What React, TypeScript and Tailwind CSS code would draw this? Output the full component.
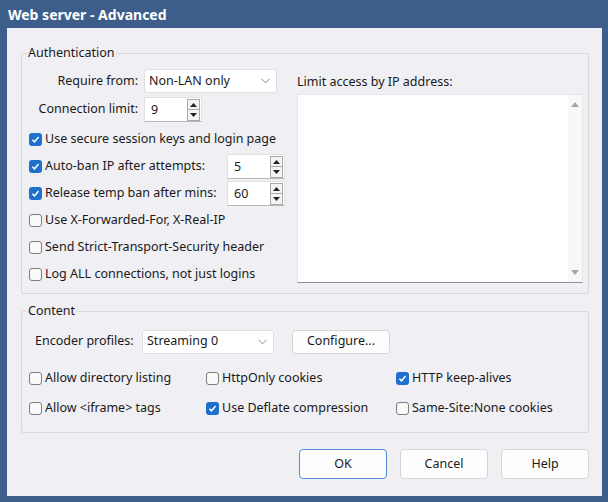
import React from "react";

function Check({ checked }: { checked?: boolean }) {
  return checked ? (
    <span className="w-[13px] h-[13px] rounded-[3px] bg-[#1f6fcc] flex items-center justify-center shrink-0">
      <svg width="9" height="9" viewBox="0 0 9 9">
        <path d="M1.4 4.7 L3.5 6.8 L7.6 2.1" stroke="white" strokeWidth="1.5" fill="none" />
      </svg>
    </span>
  ) : (
    <span className="w-[13px] h-[13px] rounded-[3px] border border-[#7d7d7d] bg-[#f9f9f9] shrink-0" />
  );
}

function CheckRow({ checked, label, className = "" }: { checked?: boolean; label: string; className?: string }) {
  return (
    <div className={"flex items-center gap-[3px] " + className}>
      <Check checked={checked} />
      <span className="whitespace-nowrap">{label}</span>
    </div>
  );
}

function Tri({ down }: { down?: boolean }) {
  return (
    <svg width="7" height="4" viewBox="0 0 7 4">
      {down ? <path d="M0 0 L7 0 L3.5 4 Z" fill="#222" /> : <path d="M0 4 L7 4 L3.5 0 Z" fill="#222" />}
    </svg>
  );
}

function Spin({ value }: { value: string }) {
  return (
    <div className="flex w-[58px] h-[25px] bg-white border border-[#e2e2e2] border-b-[#b8b8b8] shrink-0">
      <span className="flex-1 pl-[6px] leading-[23px]">{value}</span>
      <div className="flex flex-col w-[13px] mr-[1px] mt-[1px]">
        <div className="h-[11px] border border-[#a9a9a9] bg-[#f4f4f4] flex items-center justify-center">
          <Tri />
        </div>
        <div className="h-[11px] border border-[#a9a9a9] border-t-0 bg-[#f4f4f4] flex items-center justify-center">
          <Tri down />
        </div>
      </div>
    </div>
  );
}

function Select({ value, w }: { value: string; w: string }) {
  return (
    <div className={"flex items-center h-[24px] bg-white border border-[#e0e0e0] rounded-[3px] pl-[4px] pr-[6px] shrink-0 " + w}>
      <span className="flex-1">{value}</span>
      <svg width="9" height="6" viewBox="0 0 9 6">
        <path d="M0.5 0.8 L4.5 4.8 L8.5 0.8" stroke="#8a8a8a" strokeWidth="1" fill="none" />
      </svg>
    </div>
  );
}

function Btn({ label, focused, w = "w-[88px]", h = "h-[30px]" }: { label: string; focused?: boolean; w?: string; h?: string }) {
  return (
    <div
      className={
        "flex items-center justify-center bg-[#fdfdfd] rounded-[4px] border shrink-0 " +
        w +
        " " +
        h +
        " " +
        (focused ? "border-[#4f8fcf]" : "border-[#d6d6d6]")
      }
    >
      {label}
    </div>
  );
}

export default function App() {
  return (
    <div className="w-[608px] h-[502px] bg-[#3d5e8a] flex flex-col font-['Noto_Sans',sans-serif] text-[12.5px] text-[#1a1a1a] overflow-hidden">
      <div className="h-[28px] pl-[8px] flex items-center text-white font-bold text-[14px]">Web server - Advanced</div>
      <div className="ml-[7px] w-[595px] h-[468px] bg-[#f0eff3] flex flex-col">
        {/* Authentication */}
        <div className="ml-[14px] mt-[25px] w-[568px] h-[241px] border border-[#dadada] rounded-[2px] flex flex-col">
          <div className="-mt-[9px] -mb-[7px] ml-[5px] px-[1px] h-[16px] leading-[16px] bg-[#f0eff3] w-fit">Authentication</div>
          <div className="flex">
            <div className="ml-[7px] w-[256px] pt-[15px] flex flex-col">
              <div className="flex items-center h-[24px]">
                <span className="w-[109px] text-right whitespace-nowrap">Require from:</span>
                <div className="ml-[6px]">
                  <Select value="Non-LAN only" w="w-[133px]" />
                </div>
              </div>
              <div className="flex items-center h-[25px] mt-[4px]">
                <span className="w-[109px] text-right whitespace-nowrap">Connection limit:</span>
                <div className="ml-[6px]">
                  <Spin value="9" />
                </div>
              </div>
              <div className="flex flex-col mt-[4px]">
                <CheckRow checked label="Use secure session keys and login page" className="h-[27px]" />
                <div className="flex items-center justify-between h-[27px]">
                  <CheckRow checked label="Auto-ban IP after attempts:" />
                  <Spin value="5" />
                </div>
                <div className="flex items-center justify-between h-[27px]">
                  <CheckRow checked label="Release temp ban after mins:" />
                  <Spin value="60" />
                </div>
                <CheckRow label="Use X-Forwarded-For, X-Real-IP" className="h-[27px]" />
                <CheckRow label="Send Strict-Transport-Security header" className="h-[27px]" />
                <CheckRow label="Log ALL connections, not just logins" className="h-[27px]" />
              </div>
            </div>
            <div className="ml-[12px] w-[286px] pt-[20px] flex flex-col">
              <div className="h-[16px] leading-[16px]">Limit access by IP address:</div>
              <div className="mt-[4px] h-[189px] bg-white border border-[#e6e6e6] border-b-[#8f8f8f] flex justify-end">
                <div className="w-[14px] bg-[#f8f8f8] flex flex-col items-center justify-between py-[7px]">
                  <svg width="8" height="5" viewBox="0 0 8 5">
                    <path d="M0 5 L8 5 L4 0 Z" fill="#a6a6a6" />
                  </svg>
                  <svg width="8" height="5" viewBox="0 0 8 5">
                    <path d="M0 0 L8 0 L4 5 Z" fill="#a6a6a6" />
                  </svg>
                </div>
              </div>
            </div>
          </div>
        </div>

        {/* Content */}
        <div className="ml-[14px] mt-[17px] w-[568px] h-[122px] border border-[#dadada] rounded-[2px] flex flex-col">
          <div className="-mt-[9px] -mb-[7px] ml-[5px] px-[1px] h-[16px] leading-[16px] bg-[#f0eff3] w-fit">Content</div>
          <div className="flex items-center mt-[17px] h-[25px]">
            <span className="ml-[13px] w-[101px] whitespace-nowrap">Encoder profiles:</span>
            <div className="ml-[6px]">
              <Select value="Streaming 0" w="w-[132px]" />
            </div>
            <div className="ml-[18px]">
              <Btn label="Configure..." w="w-[98px]" h="h-[24px]" />
            </div>
          </div>
          <div className="flex flex-col ml-[7px] mt-[9px]">
            <div className="flex items-center h-[30px]">
              <CheckRow label="Allow directory listing" className="w-[177px]" />
              <CheckRow label="HttpOnly cookies" className="w-[190px]" />
              <CheckRow checked label="HTTP keep-alives" />
            </div>
            <div className="flex items-center h-[30px]">
              <CheckRow label="Allow <iframe> tags" className="w-[177px]" />
              <CheckRow checked label="Use Deflate compression" className="w-[190px]" />
              <CheckRow label="Same-Site:None cookies" />
            </div>
          </div>
        </div>

        {/* Buttons */}
        <div className="flex justify-end gap-[13px] pr-[13px] mt-[16px]">
          <Btn label="OK" focused />
          <Btn label="Cancel" />
          <Btn label="Help" />
        </div>
      </div>
    </div>
  );
}
